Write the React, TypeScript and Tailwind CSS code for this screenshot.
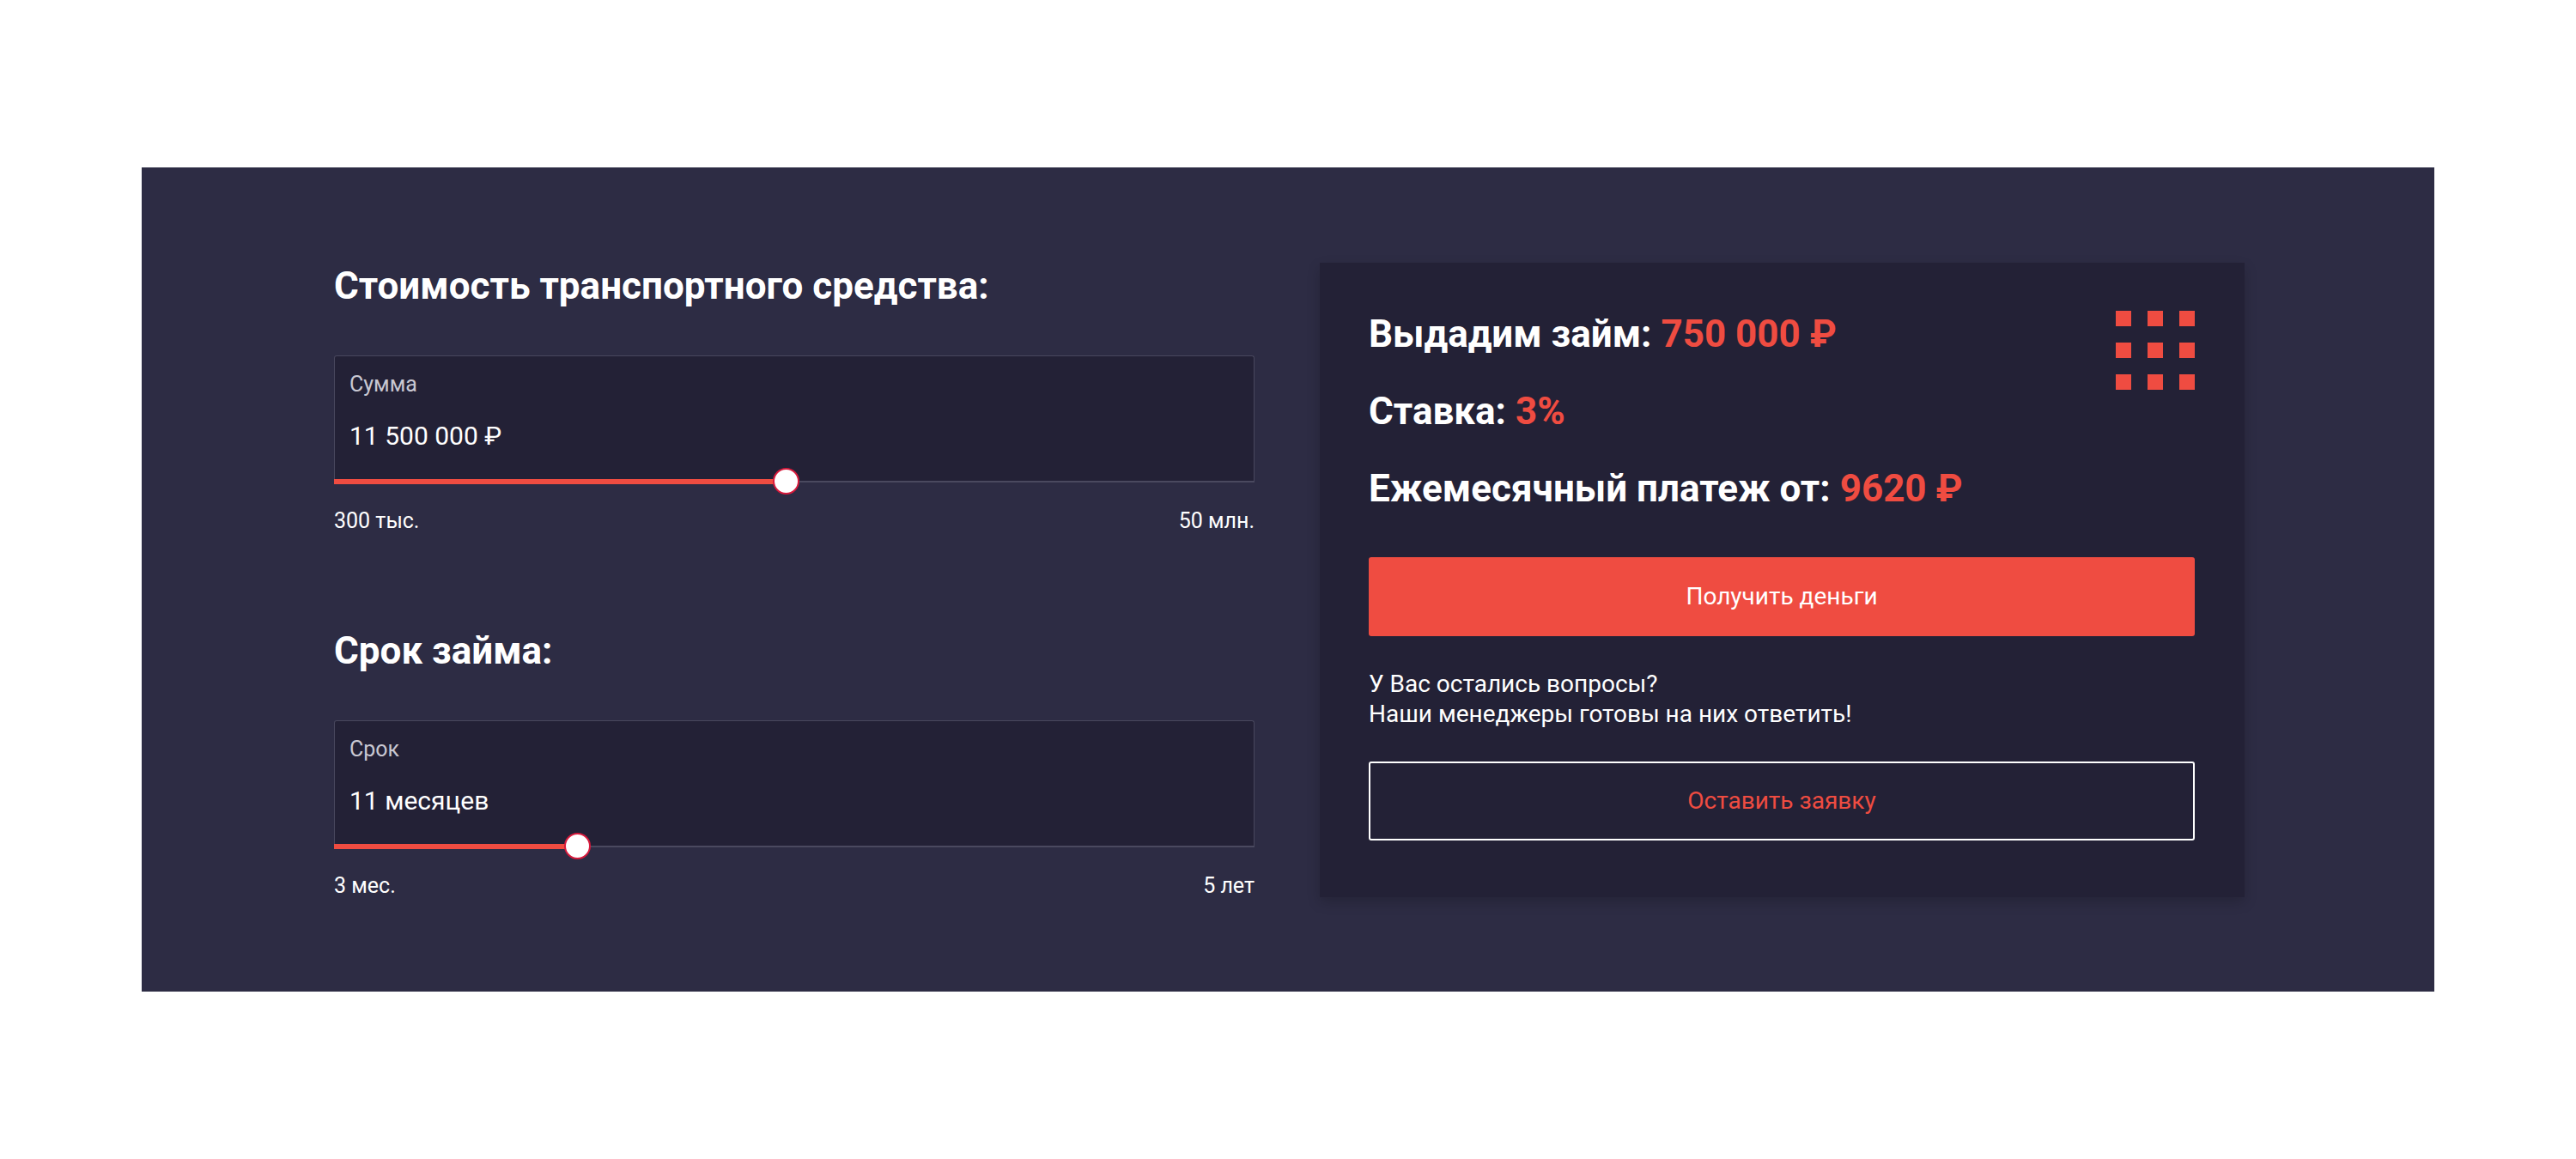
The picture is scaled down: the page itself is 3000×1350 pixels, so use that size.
import React from "react";

type RangeFieldProps = {
  title: string;
  label: string;
  value: string;
  min: string;
  max: string;
  percent: number;
};

const RangeField = ({ title, label, value, min, max, percent }: RangeFieldProps) => {
  return (
    <div className="flex flex-col">
      <h2 className="mt-[5px] text-[44px] leading-none font-bold text-white">{title}</h2>
      <div className="mt-[59px] flex flex-col bg-[#232136] border-t border-l border-r border-[#48475d] rounded-t-[3px]">
        <div className="flex flex-col px-[17px] pt-[20px] h-[145px]">
          <span className="text-[25px] leading-none text-[#c9c8d2]">{label}</span>
          <span className="mt-[33px] text-[30px] leading-none text-white">{value}</span>
        </div>
        <div className="relative h-[2px] -mx-px bg-[#4a495f]">
          <div
            className="absolute left-0 top-[-2px] h-[6px] bg-[#ef4c41]"
            style={{ width: `${percent}%` }}
          />
          <div
            className="absolute top-[-15px] w-[31px] h-[31px] -ml-[15px] rounded-full bg-white border-2 border-[#d61a3c]"
            style={{ left: `${percent}%` }}
          />
        </div>
      </div>
      <div className="mt-[32px] flex justify-between text-[25px] leading-none text-white">
        <span>{min}</span>
        <span>{max}</span>
      </div>
    </div>
  );
};

const GridIcon = () => (
  <div className="grid grid-cols-3 gap-[19px] -mt-[5px]">
    {Array.from({ length: 9 }).map((_, i) => (
      <span key={i} className="block w-[18px] h-[18px] bg-[#ef4c41]" />
    ))}
  </div>
);

export default function App() {
  return (
    <div className="min-h-[1350px] bg-white pt-[195px] px-[165px] font-['Roboto',sans-serif]">
      <div className="bg-[#2d2c44] pt-[111px] pb-[110px] pl-[224px] pr-[220px] flex items-start gap-[76px]">
        <div className="w-[1072px] flex flex-col gap-[112px]">
          <RangeField
            title="Стоимость транспортного средства:"
            label="Сумма"
            value="11 500 000 ₽"
            min="300 тыс."
            max="50 млн."
            percent={49.07}
          />
          <RangeField
            title="Срок займа:"
            label="Срок"
            value="11 месяцев"
            min="3 мес."
            max="5 лет"
            percent={26.4}
          />
        </div>

        <div className="w-[1077px] bg-[#232136] shadow-[0_6px_14px_rgba(0,0,0,0.18)] pl-[57px] pr-[58px] pt-[61px] pb-[66px] flex flex-col">
          <div className="flex justify-between items-start">
            <div className="flex flex-col gap-[46px] text-[44px] leading-none font-bold text-white">
              <p>
                Выдадим займ: <span className="text-[#ef4c41]">750 000 ₽</span>
              </p>
              <p>
                Ставка: <span className="text-[#ef4c41]">3%</span>
              </p>
              <p>
                Ежемесячный платеж от: <span className="text-[#ef4c41]">9620 ₽</span>
              </p>
            </div>
            <GridIcon />
          </div>

          <button className="mt-[58px] h-[92px] w-full rounded-[3px] bg-[#ef4c41] text-[28px] text-white">
            Получить деньги
          </button>

          <p className="mt-[38px] text-[28px] leading-[35px] text-white">
            У Вас остались вопросы?
            <br />
            Наши менеджеры готовы на них ответить!
          </p>

          <button className="mt-[38px] h-[92px] w-full rounded-[3px] border-2 border-white bg-transparent text-[28px] text-[#ef4c41]">
            Оставить заявку
          </button>
        </div>
      </div>
    </div>
  );
}
